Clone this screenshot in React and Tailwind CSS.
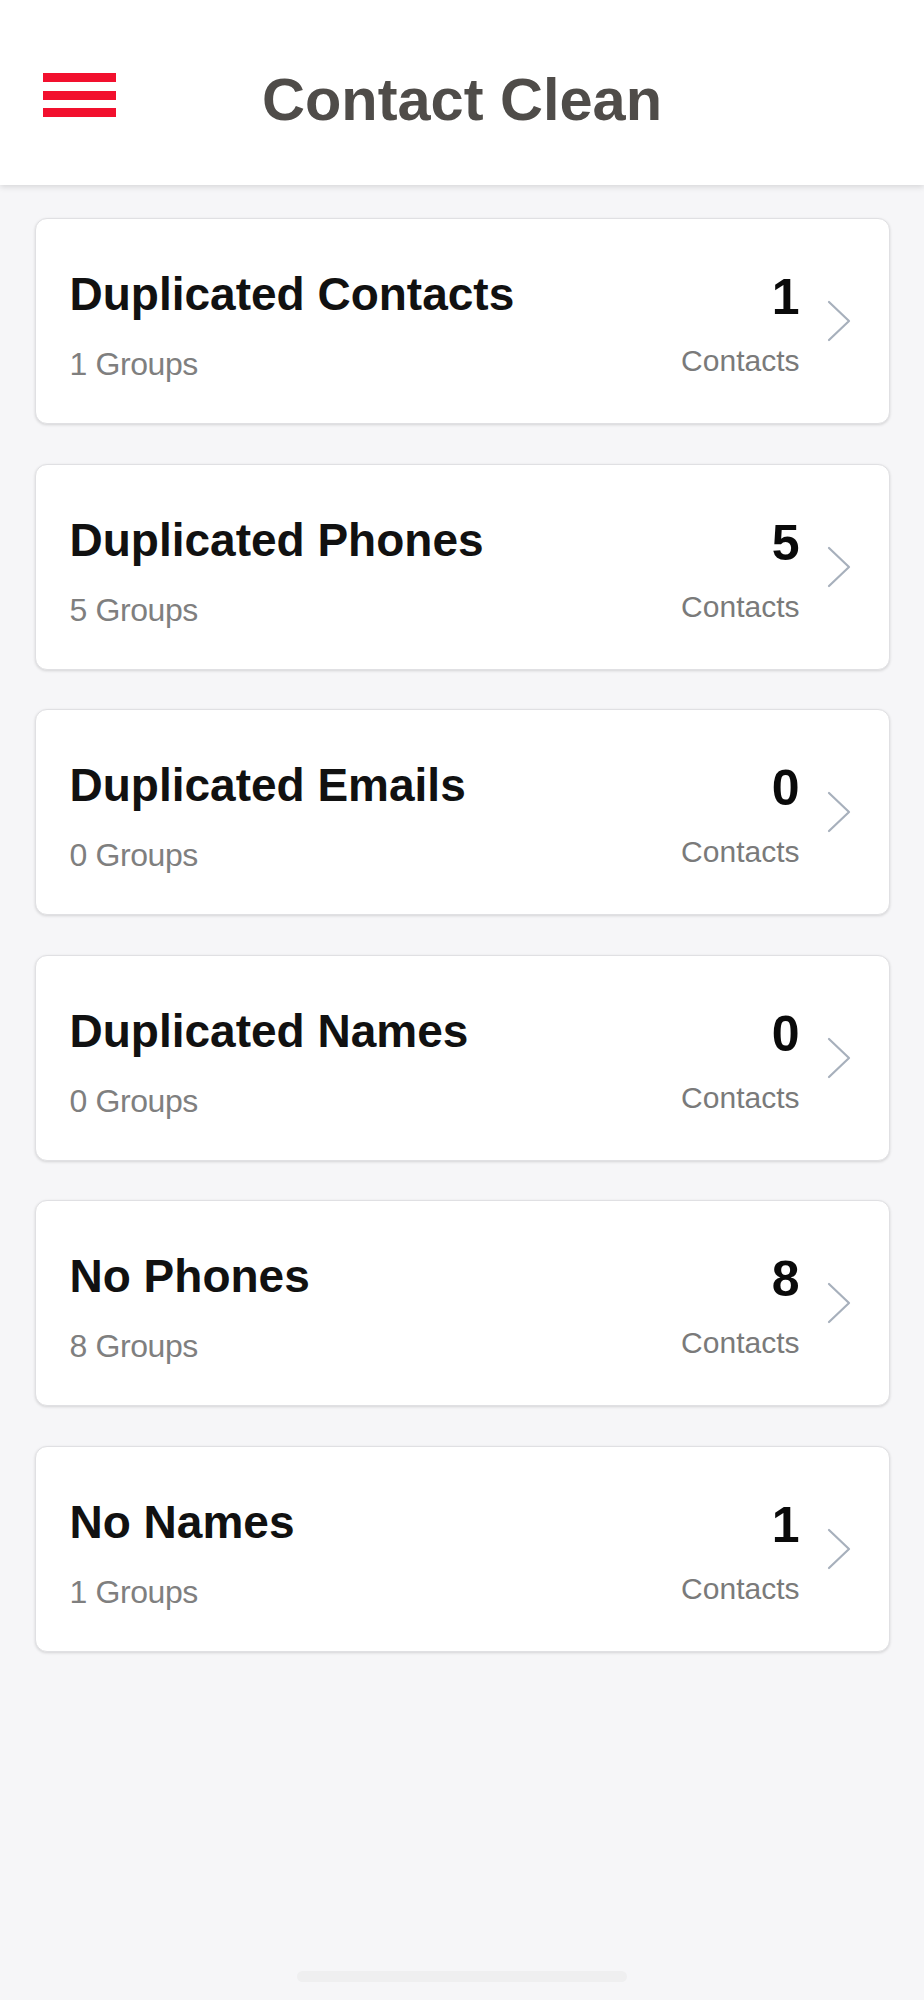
const items = [
  { title: "Duplicated Contacts", groups: 1, count: 1 },
  { title: "Duplicated Phones", groups: 5, count: 5 },
  { title: "Duplicated Emails", groups: 0, count: 0 },
  { title: "Duplicated Names", groups: 0, count: 0 },
  { title: "No Phones", groups: 8, count: 8 },
  { title: "No Names", groups: 1, count: 1 },
];

const Chevron = () => (
  <svg width="24" height="42" viewBox="0 0 24 42" fill="none" className="shrink-0">
    <polyline points="2,2 22,21 2,40" stroke="#a7b0bc" strokeWidth="2.2" strokeLinecap="round" strokeLinejoin="round" />
  </svg>
);

const Card = ({ title, groups, count }) => (
  <div className="flex h-[206px] rounded-[12px] border border-[#e0e0e3] bg-white pl-[34px] pr-[38px] shadow-[0_1px_3px_rgba(0,0,0,0.14)]">
    <div className="flex flex-1 flex-col pt-[53px]">
      <div className="text-[46px] leading-[45px] font-bold text-[#111111]">{title}</div>
      <div className="mt-[31px] text-[32px] leading-[32px] tracking-[-0.4px] text-[#7f7f7f]">{groups} Groups</div>
    </div>
    <div className="flex flex-col items-end pt-[53px]">
      <div className="text-[50px] leading-[50px] font-bold text-[#0a0a0a]">{count}</div>
      <div className="mt-[24px] text-[30px] leading-[30px] text-[#7a7a7a]">Contacts</div>
    </div>
    <div className="ml-[27px] self-center">
      <Chevron />
    </div>
  </div>
);

const App = () => {
  return (
    <div className="flex h-[2000px] flex-col bg-[#f6f6f8]" style={{ fontFamily: '"Liberation Sans", Arial, sans-serif' }}>
      <header className="relative z-10 grid h-[185px] grid-cols-[1fr_auto_1fr] items-start bg-white shadow-[0_2px_6px_rgba(0,0,0,0.13)]">
        <div className="mt-[73px] pl-[43px]">
          <div className="flex w-[73px] flex-col gap-[8.5px]">
            <span className="h-[9px] bg-[#f2102e]" />
            <span className="h-[9px] bg-[#f2102e]" />
            <span className="h-[9px] bg-[#f2102e]" />
          </div>
        </div>
        <h1 className="mt-[70px] text-[59.5px] leading-[60px] font-bold text-[#4f4c49]">Contact Clean</h1>
        <div />
      </header>

      <main className="flex flex-col gap-[39.6px] px-[34.5px] pt-[33px]">
        {items.map((it) => (
          <Card key={it.title} {...it} />
        ))}
      </main>

      <div className="mt-auto mb-[18px] flex justify-center">
        <div className="h-[11px] w-[330px] rounded-full bg-[#efeff0]" />
      </div>
    </div>
  );
};

export default App;
